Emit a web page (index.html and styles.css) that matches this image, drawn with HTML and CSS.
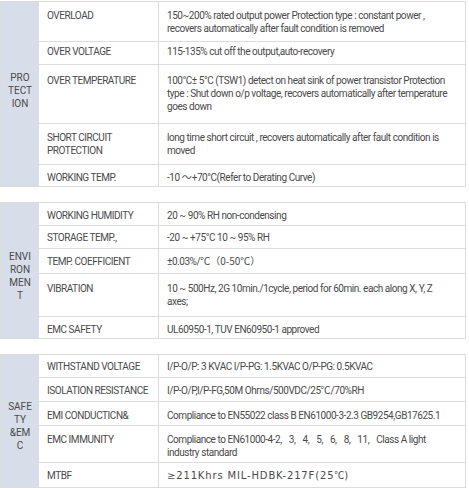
FILE: index.html
```html
<!DOCTYPE html>
<html>
<head>
<meta charset="utf-8">
<link rel="stylesheet" href="styles.css">
</head>
<body>
<div class="sheet">
  <section class="group">
    <div class="cat up">PRO<br>TECT<br>ION</div>
    <div class="rows">
      <div class="row h39 p7"><div class="label">OVERLOAD</div><div class="val">150~200% rated output power Protection type : constant power ,<br>recovers automatically after fault condition is removed</div></div>
      <div class="row h23 p3"><div class="label">OVER VOLTAGE</div><div class="val">115-135% cut off the output,auto-recovery</div></div>
      <div class="row h59 p9"><div class="label">OVER TEMPERATURE</div><div class="val">100°C± 5°C (TSW1) detect on heat sink of power transistor Protection<br>type : Shut down o/p voltage, recovers automatically after temperature<br>goes down</div></div>
      <div class="row h41 p7"><div class="label">SHORT CIRCUIT<br>PROTECTION</div><div class="val">long time short circuit , recovers automatically after fault condition is<br>moved</div></div>
      <div class="row h22 p6"><div class="label">WORKING TEMP.</div><div class="val">-10 <span class="cjk">～</span>+70°C(Refer to Derating Curve)</div></div>
    </div>
  </section>

  <section class="group">
    <div class="cat down">ENVI<br>RON<br>MEN<br>T</div>
    <div class="rows">
      <div class="row h22 p6"><div class="label">WORKING HUMIDITY</div><div class="val">20 ~ 90% RH non-condensing</div></div>
      <div class="row h23 p5"><div class="label">STORAGE TEMP.,</div><div class="val">-20 ~ +75°C 10 ~ 95% RH</div></div>
      <div class="row h25 p6"><div class="label">TEMP. COEFFICIENT</div><div class="val">±0.03%/<span class="cjk">℃（0-50℃）</span></div></div>
      <div class="row h43 p8"><div class="label">VIBRATION</div><div class="val">10 ~ 500Hz, 2G 10min./1cycle, period for 60min. each along X, Y, Z<br>axes;</div></div>
      <div class="row h22 p6"><div class="label">EMC SAFETY</div><div class="val">UL60950-1, TUV EN60950-1 approved</div></div>
    </div>
  </section>

  <section class="group">
    <div class="cat down">SAFE<br>TY<br>&amp;EM<br>C</div>
    <div class="rows">
      <div class="row h22 p5"><div class="label">WITHSTAND VOLTAGE</div><div class="val">I/P-O/P: 3 KVAC I/P-PG: 1.5KVAC O/P-PG: 0.5KVAC</div></div>
      <div class="row h24 p6"><div class="label">ISOLATION RESISTANCE</div><div class="val">I/P-O/P,I/P-FG,50M Ohms/500VDC/25<span class="cjk">℃</span>/70%RH</div></div>
      <div class="row h24 p7"><div class="label">EMI CONDUCTICN&amp;</div><div class="val">Compliance to EN55022 class B EN61000-3-2.3 GB9254,GB17625.1</div></div>
      <div class="row h37 p7"><div class="label">EMC IMMUNITY</div><div class="val">Compliance to EN61000-4-2<span class="list">, 3, 4, 5, 6, 8, 11, </span>Class A light<br>industry standard</div></div>
      <div class="row h25 p6"><div class="label">MTBF</div><div class="val wide">≥211Khrs MIL-HDBK-217F(25<span class="cjk">℃</span>)</div></div>
    </div>
  </section>
</div>
</body>
</html>
```

FILE: styles.css
```css
* {
  box-sizing: border-box;
}

html, body {
  margin: 0;
  padding: 0;
  background: #ffffff;
}

body {
  font-family: Roboto, "Liberation Sans", sans-serif;
  font-size: 10px;
  line-height: 13px;
  letter-spacing: -0.45px;
  color: #4a4a4a;
}

.sheet {
  padding-top: 1px;
  display: flex;
  flex-direction: column;
  gap: 15px;
}

.group {
  display: flex;
  width: 466px;
  border: 1px solid #dcdcdc;
}

.cat {
  width: 38px;
  flex: none;
  background: #d8dee9;
  display: flex;
  align-items: center;
  justify-content: center;
  text-align: center;
  letter-spacing: 0;
}

.cat.up {
  padding-bottom: 8px;
}

.cat.down {
  padding-top: 10px;
}

.rows {
  flex: 1;
  display: flex;
  flex-direction: column;
}

.row {
  display: flex;
  border-top: 1px solid #dcdcdc;
}

.row:first-child {
  border-top: none;
}

.label {
  width: 120px;
  flex: none;
  padding: 6px 4px 0 8px;
  border-right: 1px solid #dcdcdc;
  white-space: nowrap;
}

.val {
  flex: 1;
  padding: 6px 4px 0 8px;
  white-space: nowrap;
}

.val.wide {
  font-family: "DejaVu Sans", sans-serif;
  font-size: 10px;
  letter-spacing: 0.85px;
}

.list {
  word-spacing: 5px;
}

.cjk {
  font-family: "Noto Sans CJK SC", sans-serif;
  letter-spacing: 0;
  line-height: 0;
}

.h22 { height: 22px; }
.h23 { height: 23px; }
.h24 { height: 24px; }
.h25 { height: 25px; }
.h37 { height: 37px; }
.h39 { height: 39px; }
.h41 { height: 41px; }
.h43 { height: 43px; }
.h59 { height: 59px; }

.p3 > div { padding-top: 3px; }
.p5 > div { padding-top: 5px; }
.p6 > div { padding-top: 6px; }
.p7 > div { padding-top: 7px; }
.p8 > div { padding-top: 8px; }
.p9 > div { padding-top: 9px; }
```
